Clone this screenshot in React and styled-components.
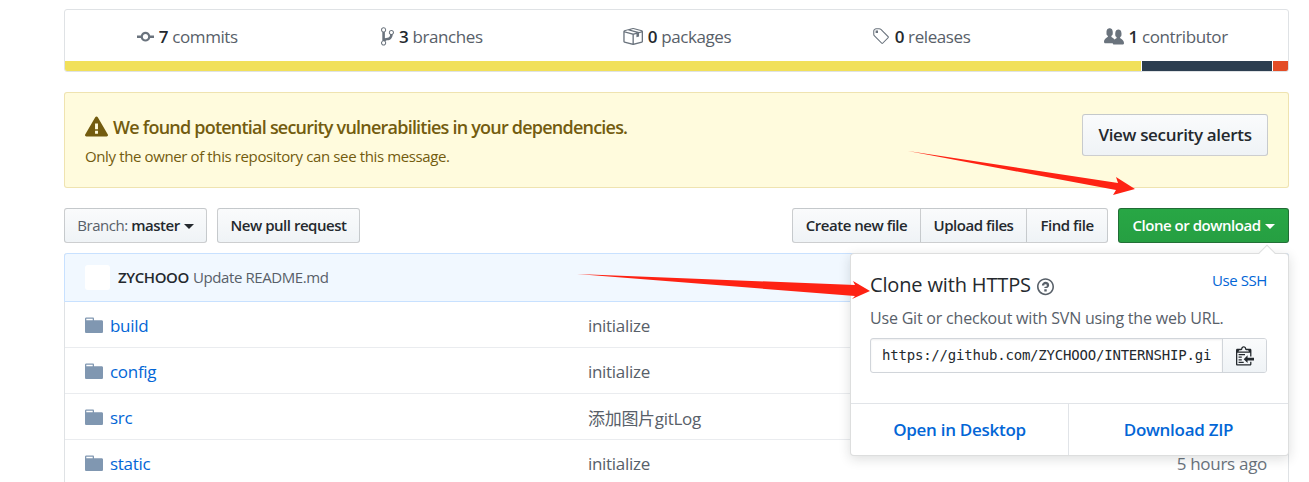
import React from 'react';
import styled, { createGlobalStyle } from 'styled-components';

const GlobalStyle = createGlobalStyle`
  html, body {
    margin: 0;
    padding: 0;
    background: #fff;
    overflow: hidden;
  }
  body {
    font-family: "Open Sans", "Noto Sans CJK SC", sans-serif;
    color: #24292e;
  }
`;

const Page = styled.div`
  position: relative;
  width: 1309px;
  height: 482px;
  overflow: hidden;
  box-sizing: border-box;
  padding: 9px 20px 0 64px;
`;

const Stats = styled.div`
  border: 1px solid #dfe2e5;
  border-radius: 3px;
  overflow: hidden;
  height: 63px;
  box-sizing: border-box;
  display: flex;
  flex-direction: column;
`;

const StatsRow = styled.div`
  flex: 1;
  display: flex;
  padding-top: 2px;
`;

const Stat = styled.div`
  flex: 1;
  display: flex;
  align-items: center;
  justify-content: center;
  gap: 5px;
  font-size: 17px;
  letter-spacing: -0.4px;
  color: #586069;
  svg { fill: #6a737d; flex: none; }
  b { font-weight: 600; color: #24292e; }
`;

const LangBar = styled.div`
  height: 10px;
  display: flex;
  gap: 1px;
`;

const LangPart = styled.span`
  flex: ${p => p.$grow} 0 0;
  background: ${p => p.$color};
`;

const Alert = styled.div`
  margin-top: 20px;
  height: 96px;
  box-sizing: border-box;
  background: #fffbdd;
  border: 1px solid rgba(176, 136, 0, 0.2);
  border-radius: 3px;
  padding: 0 20px;
  display: flex;
  align-items: center;
  justify-content: space-between;
`;

const AlertTitle = styled.div`
  display: flex;
  align-items: center;
  gap: 5px;
  font-size: 18px;
  font-weight: 600;
  letter-spacing: -0.78px;
  color: #735c0f;
  svg { fill: #735c0f; }
`;

const AlertNote = styled.div`
  margin-top: 7px;
  font-size: 15px;
  letter-spacing: -0.38px;
  color: #735c0f;
`;

const Button = styled.div`
  box-sizing: border-box;
  display: inline-flex;
  align-items: center;
  justify-content: center;
  height: ${p => p.$large ? '42px' : '35px'};
  width: ${p => p.$width}px;
  padding-bottom: 2px;
  font-size: ${p => p.$large ? '17px' : '15px'};
  font-weight: 600;
  letter-spacing: ${p => p.$large ? '-0.33px' : '-0.47px'};
  color: #24292e;
  background: linear-gradient(#fafbfc, #eff3f6);
  border: 1px solid rgba(27, 31, 35, 0.2);
  border-radius: 3px;
  white-space: pre;
`;

const AlertButton = styled(Button)`
  margin-bottom: 10px;
`;

const Muted = styled.span`
  font-weight: 400;
  color: #586069;
`;

const Caret = styled.i`
  display: inline-block;
  width: 0;
  height: 0;
  margin-left: 4px;
  margin-top: 3px;
  border: 5px solid transparent;
  border-bottom-width: 0;
  border-top-color: ${p => p.$color || '#24292e'};
`;

const Toolbar = styled.div`
  margin-top: 20px;
  display: flex;
  justify-content: space-between;
  height: 35px;
`;

const ToolGroup = styled.div`
  display: flex;
  gap: 10px;
`;

const Joined = styled.div`
  display: flex;
  ${Button} { border-radius: 0; margin-left: -1px; }
  ${Button}:first-child { border-radius: 3px 0 0 3px; margin-left: 0; }
  ${Button}:last-child { border-radius: 0 3px 3px 0; }
`;

const GreenButton = styled(Button)`
  color: #fff;
  background: linear-gradient(#28a745, #269f42);
  border-color: rgba(27, 31, 35, 0.4);
`;

const FileTable = styled.div`
  margin-top: 10px;
  border: 1px solid #dfe2e5;
  border-top: 0;
  border-radius: 3px 3px 0 0;
`;

const CommitRow = styled.div`
  height: 49px;
  margin: 0 -1px;
  box-sizing: border-box;
  background: #f1f8ff;
  border: 1px solid #c8e1ff;
  border-radius: 3px 3px 0 0;
  padding: 0 0 2px 20px;
  display: flex;
  align-items: center;
  gap: 8px;
  font-size: 15px;
  letter-spacing: -0.4px;
  color: #586069;
  b { font-weight: 600; color: #24292e; margin-right: 4px; }
`;

const Avatar = styled.span`
  width: 25px;
  height: 25px;
  margin-top: 2px;
  border-radius: 3px;
  background: #fff;
`;

const FileRow = styled.div`
  height: ${p => p.$first ? '45px' : '46px'};
  box-sizing: border-box;
  padding: 2px 21px 0 20px;
  border-top: ${p => p.$first ? '0' : '1px solid #eaecef'};
  display: grid;
  grid-template-columns: 26px 477px 1fr auto;
  align-items: center;
  font-size: 17px;
  letter-spacing: -0.3px;
  svg { fill: #8097b1; }
`;

const FileName = styled.span`
  color: #0366d6;
  margin-left: -1px;
`;

const FileMessage = styled.span`
  color: #586069;
`;

const FileAge = styled.span`
  grid-column: 4;
  color: #6a737d;
`;

const Popover = styled.div`
  position: absolute;
  top: 253px;
  left: 850px;
  width: 439px;
  height: 203px;
  box-sizing: border-box;
  background: #fff;
  border: 1px solid rgba(27, 31, 35, 0.15);
  border-radius: 4px;
  box-shadow: 0 3px 12px rgba(27, 31, 35, 0.15);
  display: flex;
  flex-direction: column;
  &::before {
    content: "";
    position: absolute;
    top: -7px;
    right: 15px;
    width: 11px;
    height: 11px;
    background: #fff;
    border-left: 1px solid rgba(27, 31, 35, 0.15);
    border-top: 1px solid rgba(27, 31, 35, 0.15);
    transform: rotate(45deg);
  }
`;

const PopBody = styled.div`
  flex: 1;
  padding: 17px 21px 0 19px;
`;

const PopHead = styled.div`
  display: flex;
  justify-content: space-between;
  align-items: flex-start;
`;

const PopTitle = styled.div`
  display: flex;
  align-items: center;
  gap: 6px;
  font-size: 20px;
  font-weight: 500;
  letter-spacing: -0.15px;
  line-height: 28px;
  color: #24292e;
  svg { fill: #586069; margin-top: 3px; }
`;

const SmallLink = styled.span`
  margin-top: -1px;
  font-size: 15px;
  letter-spacing: -0.4px;
  line-height: 20px;
  color: #0366d6;
`;

const PopNote = styled.div`
  margin-top: 9px;
  font-size: 16px;
  letter-spacing: -0.2px;
  line-height: 20px;
  color: #586069;
`;

const UrlGroup = styled.div`
  margin-top: 10px;
  height: 35px;
  box-sizing: border-box;
  display: flex;
  border: 1px solid #d1d5da;
  border-radius: 3px;
  overflow: hidden;
`;

const UrlField = styled.div`
  flex: 1;
  min-width: 0;
  padding: 0 10px 0 11px;
  box-shadow: inset 0 1px 2px rgba(27, 31, 35, 0.075);
`;

const UrlText = styled.div`
  overflow: hidden;
  white-space: nowrap;
  font-family: "DejaVu Sans Mono", monospace;
  font-size: 14px;
  letter-spacing: -0.2px;
  line-height: 32px;
  color: #24292e;
`;

const CopyButton = styled.div`
  width: 43px;
  flex: none;
  display: flex;
  align-items: center;
  justify-content: center;
  border-left: 1px solid #d1d5da;
  background: linear-gradient(#fafbfc, #eff3f6);
  svg { fill: #24292e; }
`;

const PopFooter = styled.div`
  height: 52px;
  flex: none;
  box-sizing: border-box;
  display: grid;
  grid-template-columns: 217px 1fr;
  border-top: 1px solid #e1e4e8;
`;

const FooterLink = styled.div`
  display: flex;
  align-items: center;
  justify-content: center;
  font-size: 17px;
  font-weight: 600;
  letter-spacing: -0.28px;
  color: #0366d6;
  & + & { border-left: 1px solid #e1e4e8; }
`;

// the red arrows were pasted on top of the screenshot
const Annotation = styled.svg`
  position: absolute;
  top: 0;
  left: 0;
  width: 1309px;
  height: 482px;
  pointer-events: none;
  fill: #fe2213;
`;

const Octicon = ({ w, vw, d }) => (
  <svg width={w} height={w * 16 / vw} viewBox={`0 0 ${vw} 16`}><path fillRule="evenodd" d={d} /></svg>
);

const icons = {
  commit: 'M10.86 7c-.45-1.72-2-3-3.86-3-1.86 0-3.41 1.28-3.86 3H0v2h3.14c.45 1.72 2 3 3.86 3 1.86 0 3.41-1.28 3.86-3H14V7h-3.14zM7 10.2c-1.22 0-2.2-.98-2.2-2.2 0-1.22.98-2.2 2.2-2.2 1.22 0 2.2.98 2.2 2.2 0 1.22-.98 2.2-2.2 2.2z',
  branch: 'M10 5c0-1.11-.89-2-2-2a1.993 1.993 0 0 0-1 3.72v.3c-.02.52-.23.98-.63 1.38-.4.4-.86.61-1.38.63-.83.02-1.48.16-2 .45V4.72a1.993 1.993 0 0 0-1-3.72C.88 1 0 1.89 0 3a2 2 0 0 0 1 1.72v6.56c-.59.35-1 .99-1 1.72 0 1.11.89 2 2 2 1.11 0 2-.89 2-2 0-.53-.2-1-.53-1.36.09-.06.48-.41.59-.47.25-.11.56-.17.94-.17 1.05-.05 1.95-.45 2.75-1.25S8.95 7.77 9 6.73h-.02C9.59 6.37 10 5.73 10 5zM2 1.8c.66 0 1.2.55 1.2 1.2 0 .65-.55 1.2-1.2 1.2C1.35 4.2.8 3.65.8 3c0-.65.55-1.2 1.2-1.2zm0 12.41c-.66 0-1.2-.55-1.2-1.2 0-.65.55-1.2 1.2-1.2.65 0 1.2.55 1.2 1.2 0 .65-.55 1.2-1.2 1.2zm6-8c-.66 0-1.2-.55-1.2-1.2 0-.65.55-1.2 1.2-1.2.65 0 1.2.55 1.2 1.2 0 .65-.55 1.2-1.2 1.2z',
  pack: 'M1 4.27v7.47c0 .45.3.84.75.97l6.5 1.73c.16.05.34.05.5 0l6.5-1.73c.45-.13.75-.52.75-.97V4.27c0-.45-.3-.84-.75-.97l-6.5-1.74a1.4 1.4 0 0 0-.5 0L1.75 3.3c-.45.13-.75.52-.75.97zm7 9.09l-6-1.59V5l6 1.61v6.75zM2 4l2.5-.67L11 5.06l-2.5.67L2 4zm13 7.77l-6 1.59V6.61l2-.55V8.5l2-.53V5.53L15 5v6.77zm-2-7.24L6.5 2.8l2-.53L15 4l-2 .53z',
  tag: 'M7.73 1.73C7.26 1.26 6.62 1 5.96 1H3.5C2.13 1 1 2.13 1 3.5v2.47c0 .66.27 1.3.73 1.77l6.06 6.06c.39.39 1.02.39 1.41 0l4.59-4.59a.996.996 0 0 0 0-1.41L7.73 1.73zM2.38 7.09c-.31-.3-.47-.7-.47-1.13V3.5c0-.88.72-1.59 1.59-1.59h2.47c.42 0 .83.16 1.13.47l6.14 6.13-4.73 4.73-6.13-6.15zM3.01 3h2v2H3V3h.01z',
  people: 'M16 12.999c0 .439-.45 1-1 1H7.995c-.539 0-.994-.447-.995-.999H1c-.54 0-1-.561-1-1 0-2.634 3-4 3-4s.229-.409 0-1c-.841-.621-1.058-.59-1-3 .058-2.419 1.367-3 2.5-3s2.442.58 2.5 3c.058 2.41-.159 2.379-1 3-.229.59 0 1 0 1s1.549.711 2.42 2.088C9.196 9.369 10 8.999 10 8.999s.229-.409 0-1c-.841-.62-1.058-.59-1-3 .058-2.419 1.367-3 2.5-3s2.437.581 2.495 3c.059 2.41-.158 2.38-1 3-.229.59 0 1 0 1s3.005 1.366 3.005 4z',
  alert: 'M8.893 1.5c-.183-.31-.52-.5-.887-.5s-.703.19-.886.5L.138 13.499a.98.98 0 0 0 0 1.001c.193.31.53.501.886.501h13.964c.367 0 .704-.19.877-.5a1.03 1.03 0 0 0 .01-1.002L8.893 1.5zm.133 11.497H6.987v-2.003h2.039v2.003zm0-3.004H6.987V5.987h2.039v4.006z',
  folder: 'M13 4H7V3c0-.66-.31-1-1-1H1c-.55 0-1 .45-1 1v10c0 .55.45 1 1 1h12c.55 0 1-.45 1-1V5c0-.55-.45-1-1-1zM6 4H1V3h5v1z',
  question: 'M6 10h2v2H6v-2zm4-3.5C10 8.64 8 9 8 9H6c0-.55.45-1 1-1h.5c.28 0 .5-.22.5-.5v-1c0-.28-.22-.5-.5-.5h-1c-.28 0-.5.22-.5.5V7H4c0-1.5 1.5-3 3-3s3 1 3 2.5zM7 2.3c3.14 0 5.7 2.56 5.7 5.7s-2.56 5.7-5.7 5.7A5.71 5.71 0 0 1 1.3 8c0-3.14 2.56-5.7 5.7-5.7zM7 1C3.14 1 0 4.14 0 8s3.14 7 7 7 7-3.14 7-7-3.14-7-7-7z',
  clippy: 'M2 13h4v1H2v-1zm5-6H2v1h5V7zm2 3V8l-3 3 3 3v-2h5v-2H9zM4.5 9H2v1h2.5V9zM2 12h2.5v-1H2v1zm9 1h1v2c-.02.28-.11.52-.3.7-.19.18-.42.28-.7.3H1c-.55 0-1-.45-1-1V4c0-.55.45-1 1-1h3c0-1.11.89-2 2-2 1.11 0 2 .89 2 2h3c.55 0 1 .45 1 1v5h-1V6H1v9h10v-2zM2 5h8c0-.55-.45-1-1-1H8c-.55 0-1-.45-1-1s-.45-1-1-1-1 .45-1 1-.45 1-1 1H3c-.55 0-1 .45-1 1z',
};

const stats = [
  { icon: icons.commit, w: 17, vw: 14, count: '7', label: 'commits' },
  { icon: icons.branch, w: 13, vw: 10, count: '3', label: 'branches' },
  { icon: icons.pack, w: 21, vw: 16, count: '0', label: 'packages' },
  { icon: icons.tag, w: 18, vw: 15, count: '0', label: 'releases' },
  { icon: icons.people, w: 20, vw: 16, count: '1', label: 'contributor' },
];

const files = [
  { name: 'build', message: 'initialize' },
  { name: 'config', message: 'initialize' },
  { name: 'src', message: '添加图片gitLog' },
  { name: 'static', message: 'initialize', age: '5 hours ago' },
];

function App() {
  return (
    <Page>
      <GlobalStyle />

      <Stats>
        <StatsRow>
          {stats.map(s => (
            <Stat key={s.label}>
              <Octicon w={s.w} vw={s.vw} d={s.icon} />
              <span><b>{s.count}</b> {s.label}</span>
            </Stat>
          ))}
        </StatsRow>
        <LangBar>
          <LangPart $grow={1076} $color="#f1e05a" />
          <LangPart $grow={130} $color="#2c3e50" />
          <LangPart $grow={15} $color="#e34c26" />
        </LangBar>
      </Stats>

      <Alert>
        <div>
          <AlertTitle>
            <Octicon w={23} vw={16} d={icons.alert} />
            We found potential security vulnerabilities in your dependencies.
          </AlertTitle>
          <AlertNote>Only the owner of this repository can see this message.</AlertNote>
        </div>
        <AlertButton $large $width={186}>View security alerts</AlertButton>
      </Alert>

      <Toolbar>
        <ToolGroup>
          <Button $width={143}><Muted>Branch: </Muted>master<Caret /></Button>
          <Button $width={143}>New pull request</Button>
        </ToolGroup>
        <ToolGroup>
          <Joined>
            <Button $width={129}>Create new file</Button>
            <Button $width={107}>Upload files</Button>
            <Button $width={82}>Find file</Button>
          </Joined>
          <GreenButton $width={171}>Clone or download<Caret $color="#fff" /></GreenButton>
        </ToolGroup>
      </Toolbar>

      <FileTable>
        <CommitRow>
          <Avatar />
          <span><b>ZYCHOOO</b>Update README.md</span>
        </CommitRow>
        {files.map((f, i) => (
          <FileRow key={f.name} $first={i === 0}>
            <Octicon w={18} vw={14} d={icons.folder} />
            <FileName>{f.name}</FileName>
            <FileMessage>{f.message}</FileMessage>
            {f.age && <FileAge>{f.age}</FileAge>}
          </FileRow>
        ))}
      </FileTable>

      <Popover>
        <PopBody>
          <PopHead>
            <PopTitle>Clone with HTTPS <Octicon w={17} vw={14} d={icons.question} /></PopTitle>
            <SmallLink>Use SSH</SmallLink>
          </PopHead>
          <PopNote>Use Git or checkout with SVN using the web URL.</PopNote>
          <UrlGroup>
            <UrlField><UrlText>https://github.com/ZYCHOOO/INTERNSHIP.git</UrlText></UrlField>
            <CopyButton><Octicon w={18} vw={14} d={icons.clippy} /></CopyButton>
          </UrlGroup>
        </PopBody>
        <PopFooter>
          <FooterLink>Open in Desktop</FooterLink>
          <FooterLink>Download ZIP</FooterLink>
        </PopFooter>
      </Popover>

      <Annotation viewBox="0 0 1309 482">
        <polygon points="908,151 1118,183 1116,177 1135,189 1113,195 1116,190" />
        <polygon points="577,274 855,285 853,281 870,291 852,299 855,296" />
      </Annotation>
    </Page>
  );
}

export default App;
